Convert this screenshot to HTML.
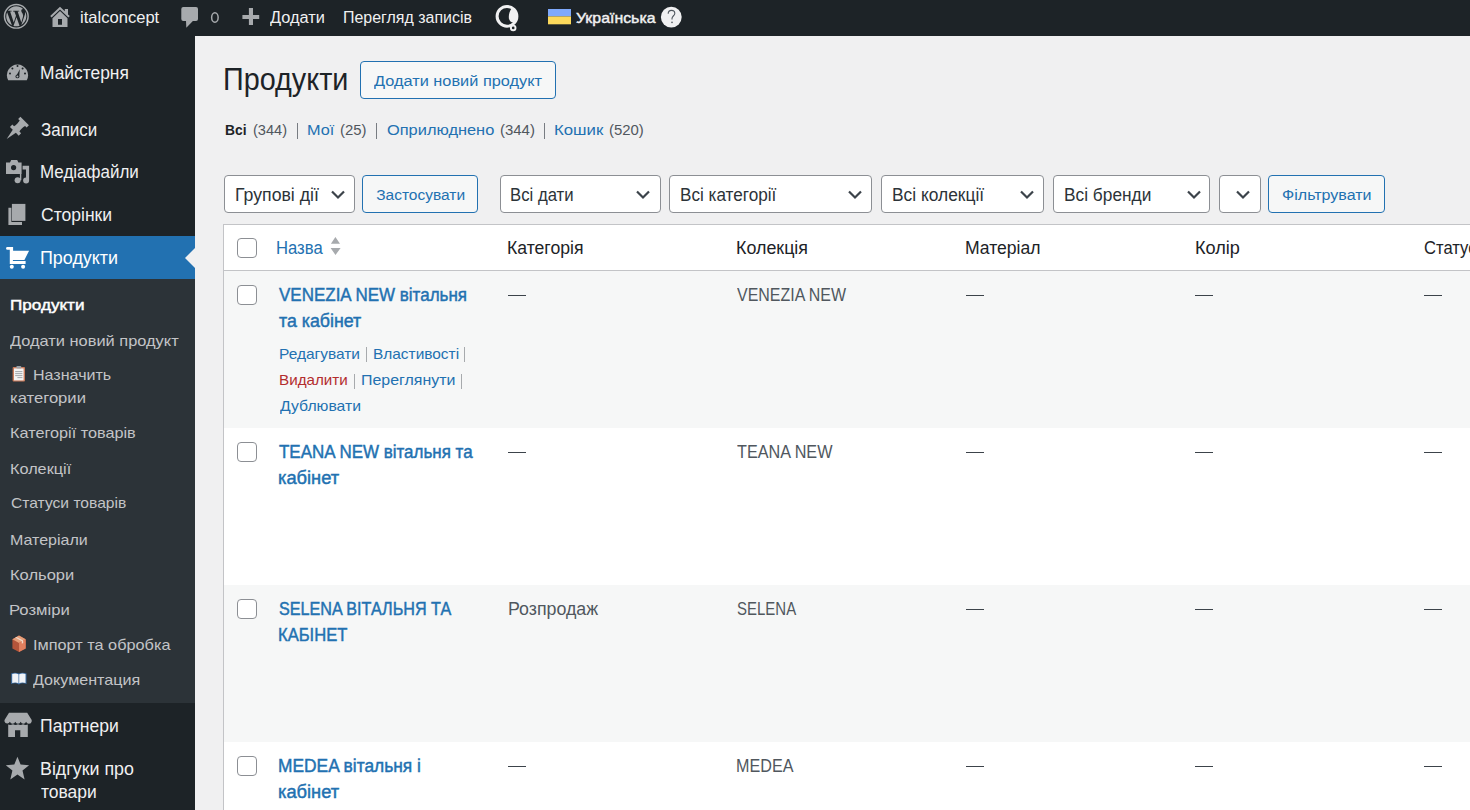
<!DOCTYPE html>
<html lang="uk"><head><meta charset="utf-8"><title>Продукти</title>
<style>
html,body{margin:0;padding:0;width:1470px;height:810px;overflow:hidden;background:#f0f0f1;font-family:"Liberation Sans",sans-serif}
.t{position:absolute;white-space:nowrap;line-height:1;transform-origin:0 0}
.b{position:absolute;box-sizing:border-box}
#bar{left:0;top:0;width:1470px;height:36px;background:#1d2327}
#side{left:0;top:36px;width:195px;height:774px;background:#1d2327}
#act{left:0;top:236px;width:195px;height:43px;background:#2271b1}
#sub{left:0;top:279px;width:195px;height:424px;background:#2c3338}
.sel{background:#fff;border:1px solid #8c8f94;border-radius:4px;top:175px;height:38px}
.btn{background:#f6f7f7;border:1px solid #2271b1;border-radius:4px}
.cb{background:#fff;border:1px solid #8c8f94;border-radius:4px;width:20px;height:20px;left:237px}
svg{position:absolute;overflow:visible}
</style></head><body>
<div class="b" id="bar"></div>
<div class="b" id="side"></div>
<div class="b" id="act"></div>
<div class="b" id="sub"></div>
<!-- active arrow -->
<svg style="left:185px;top:248px" width="10" height="20" viewBox="0 0 10 20"><path d="M10 0 L0 10 L10 20 Z" fill="#f0f0f1"/></svg>

<!-- page title button -->
<div class="b btn" style="left:360px;top:61px;width:196px;height:38px"></div>
<!-- filter bar -->
<div class="b sel" style="left:224px;width:131px"></div>
<div class="b btn" style="left:362px;top:175px;width:116px;height:38px"></div>
<div class="b sel" style="left:500px;width:161px"></div>
<div class="b sel" style="left:669px;width:203px"></div>
<div class="b sel" style="left:881px;width:163px"></div>
<div class="b sel" style="left:1053px;width:157px"></div>
<div class="b sel" style="left:1219px;width:42px"></div>
<div class="b btn" style="left:1268px;top:175px;width:117px;height:38px"></div>
<!-- chevrons -->
<svg style="left:331px;top:190px" width="14" height="9" viewBox="0 0 14 9"><path d="M1 1.5 L7 7.5 L13 1.5" fill="none" stroke="#3c434a" stroke-width="2.2"/></svg>
<svg style="left:636px;top:190px" width="14" height="9" viewBox="0 0 14 9"><path d="M1 1.5 L7 7.5 L13 1.5" fill="none" stroke="#3c434a" stroke-width="2.2"/></svg>
<svg style="left:848px;top:190px" width="14" height="9" viewBox="0 0 14 9"><path d="M1 1.5 L7 7.5 L13 1.5" fill="none" stroke="#3c434a" stroke-width="2.2"/></svg>
<svg style="left:1020px;top:190px" width="14" height="9" viewBox="0 0 14 9"><path d="M1 1.5 L7 7.5 L13 1.5" fill="none" stroke="#3c434a" stroke-width="2.2"/></svg>
<svg style="left:1187px;top:190px" width="14" height="9" viewBox="0 0 14 9"><path d="M1 1.5 L7 7.5 L13 1.5" fill="none" stroke="#3c434a" stroke-width="2.2"/></svg>
<svg style="left:1236px;top:190px" width="14" height="9" viewBox="0 0 14 9"><path d="M1 1.5 L7 7.5 L13 1.5" fill="none" stroke="#3c434a" stroke-width="2.2"/></svg>

<!-- table -->
<div class="b" style="left:223px;top:224px;width:1300px;height:600px;background:#fff;border-left:1px solid #c3c4c7;border-top:1px solid #c3c4c7"></div>
<div class="b" style="left:224px;top:270px;width:1300px;height:1px;background:#c3c4c7"></div>
<div class="b" style="left:224px;top:271px;width:1300px;height:157px;background:#f6f7f7"></div>
<div class="b" style="left:224px;top:585px;width:1300px;height:157px;background:#f6f7f7"></div>
<div class="b cb" style="top:238px"></div>
<div class="b cb" style="top:285px"></div>
<div class="b cb" style="top:442px"></div>
<div class="b cb" style="top:599px"></div>
<div class="b cb" style="top:756px"></div>
<!-- sort arrows -->
<svg style="left:330px;top:237px" width="11" height="18" viewBox="0 0 11 18"><path d="M0.9 6.8 L5.4 -0.1 L10 6.8 Z M0.6 11 L5.5 18.1 L10.6 11 Z" fill="#a7aaad"/></svg>

<svg style="left:0;top:0" width="1470" height="810" viewBox="0 0 1470 810">
<!-- WP logo -->
<g transform="translate(3.75 3.75) scale(1.046)"><circle cx="12" cy="12" r="11.3" fill="none" stroke="#a7aaad" stroke-width="1.4"/><path transform="translate(12 12) scale(0.89) translate(-12 -12)" fill="#a7aaad" d="M21.469 6.825c.84 1.537 1.318 3.3 1.318 5.175 0 3.979-2.156 7.456-5.363 9.325l3.295-9.527c.615-1.54.82-2.771.82-3.864 0-.405-.026-.78-.07-1.11M13.488 6.93c.647-.03 1.232-.105 1.232-.105.582-.075.514-.93-.067-.899 0 0-1.755.135-2.88.135-1.064 0-2.850-.15-2.850-.15-.585-.03-.661.855-.075.885 0 0 .54.061 1.125.09l1.68 4.605-2.37 7.08L5.354 6.9c.649-.03 1.234-.1 1.234-.1.585-.075.516-.93-.065-.896 0 0-1.746.138-2.874.138-.2 0-.438-.008-.69-.015C4.911 3.15 8.235 1.215 12 1.215c2.809 0 5.365 1.072 7.286 2.833-.046-.003-.091-.009-.141-.009-1.06 0-1.812.923-1.812 1.914 0 .89.513 1.643 1.06 2.531.411.72.89 1.643.89 2.977 0 .915-.354 1.994-.821 3.479l-1.075 3.585-3.9-11.61.001.014zM12 22.784c-1.059 0-2.081-.153-3.048-.437l3.237-9.406 3.315 9.087c.024.053.05.101.078.149-1.12.393-2.325.609-3.582.609M1.211 12c0-1.564.336-3.050.935-4.390L7.290 21.709C3.694 19.960 1.212 16.271 1.211 12"/></g>
<!-- home -->
<path d="M50.2 16.1 L60 6.8 L64.8 11.3 V9.1 H68 V14.4 L69.8 16.1 L68.4 17.5 L60 9.6 L51.6 17.5 Z" fill="#a7aaad"/>
<path d="M52.5 18.2 L60 10.9 L67.5 18.2 V27.1 H52.5 Z M58 19.1 V24.8 H62 V19.1 Z" fill="#a7aaad" fill-rule="evenodd"/>
<!-- comment -->
<path d="M183.3 6.9 H196 Q198 6.9 198 8.9 V19 Q198 21 196 21 H192.9 L186.3 27.8 L186 21 H183.3 Q181.3 21 181.3 19 V8.9 Q181.3 6.9 183.3 6.9 Z" fill="#a7aaad"/>
<ellipse cx="214.9" cy="17.45" rx="3.25" ry="4.75" fill="none" stroke="#a7aaad" stroke-width="1.5"/>
<!-- plus -->
<path d="M248.9 7.9 H253 V14.9 H259.2 V18.9 H253 V25 H248.9 V18.9 H242.4 V14.9 H248.9 Z" fill="#a7aaad"/>
<!-- Q logo -->
<circle cx="507" cy="16.3" r="9.9" fill="none" stroke="#f0f0f1" stroke-width="3.0"/>
<path d="M512.4 7.2 C509.8 10.2 508.4 14.2 508.9 18.2 C509.4 22 513.2 23.6 516 21.6 C518.6 19.4 518.4 12.6 512.4 7.2 Z" fill="#f0f0f1"/>
<circle cx="513.2" cy="27.9" r="2.3" fill="none" stroke="#f0f0f1" stroke-width="1.9"/>
<!-- flag -->
<rect x="548" y="9" width="23" height="7.4" fill="#7fa9fb"/>
<rect x="548" y="16.4" width="23" height="7.9" fill="#fcd95b"/>
<!-- help -->
<circle cx="671.3" cy="17.1" r="10.4" fill="#f0f0f1"/>
<path d="M668.2 13.8 C668.2 11.6 669.7 10.4 671.5 10.4 C673.4 10.4 674.8 11.7 674.8 13.4 C674.8 15.6 672 16 672 18.6 V19.4" fill="none" stroke="#50575e" stroke-width="1.1"/>
<circle cx="672" cy="22.4" r="0.8" fill="#50575e"/>

<!-- dashboard gauge -->
<path d="M8.2 80.2 A10.6 10.6 0 1 1 26.8 80.2 Z" fill="#a7aaad"/>
<circle cx="17.5" cy="66" r="1" fill="#1d2327"/>
<circle cx="12.4" cy="68.6" r="1" fill="#1d2327"/>
<circle cx="22.6" cy="68.6" r="1" fill="#1d2327"/>
<circle cx="10" cy="73.5" r="1" fill="#1d2327"/>
<circle cx="25" cy="73.5" r="1" fill="#1d2327"/>
<path d="M16 76.5 L19.8 69.2 L19.2 77.4 Z" fill="#1d2327"/>
<circle cx="17.4" cy="76.4" r="1.9" fill="#1d2327"/>
<circle cx="17.4" cy="76.4" r="1.0" fill="#a7aaad"/>
<!-- pin -->
<g transform="translate(15.6 130) rotate(45)">
<path d="M-6 -12.8 H6 V-9.6 H3.8 C3.1 -7.4 3.1 -3.6 3.8 -1.6 H6.2 V1.8 H2.2 L0 12.6 L-2.2 1.8 H-6.2 V-1.6 H-3.8 C-3.1 -3.6 -3.1 -7.4 -3.8 -9.6 H-6 Z" fill="#a7aaad"/>
</g>
<!-- media -->
<path d="M6 162.5 H10 L11.2 160 H17.2 L18.4 162.5 H21.6 V174 H6 Z" fill="#a7aaad"/>
<circle cx="13.6" cy="167.6" r="2.6" fill="#1d2327"/>
<path d="M22.6 165.8 H29.1 V180.5 A3 3 0 1 1 26 177.5 V169.4 H22.6 Z" fill="#a7aaad"/>
<circle cx="17.6" cy="180.2" r="3" fill="#a7aaad"/>
<path d="M20.6 174 V180.2" stroke="#a7aaad" stroke-width="1.4"/>
<!-- pages -->
<path d="M11.9 203.9 H25.4 V220.9 H11.9 Z" fill="#a7aaad"/>
<path d="M8.4 207.8 H11.4 V221.9 H22 V225.1 H8.4 Z" fill="#a7aaad"/>
<!-- cart -->
<path d="M7.4 247.1 H13.1 V250.7 H29.1 L24.4 260 H12.9 V260.9 H25.6 V264 H9.8 V249.8 H7.4 A1.35 1.35 0 0 1 7.4 247.1 Z" fill="#ffffff"/>
<circle cx="11.8" cy="266.8" r="2" fill="#ffffff"/>
<circle cx="23.1" cy="266.8" r="2" fill="#ffffff"/>
<!-- store -->
<path d="M9 712.8 H27.2 L31.7 720 V721.5 A2.9 2.9 0 0 1 26.1 721.8 A2.9 2.9 0 0 1 20.7 721.8 A2.9 2.9 0 0 1 15.3 721.8 A2.9 2.9 0 0 1 9.9 721.8 A2.9 2.9 0 0 1 4.5 721.5 V720 Z" fill="#a7aaad"/>
<path d="M8.2 724.6 C9.6 725.2 11.6 725 13 724.2 C14.6 725.2 16.6 725.2 18 724.2 C19.6 725.2 21.6 725.2 23 724.2 C24.6 725.2 26.4 725.2 27.8 724.6 V737.1 H20.3 V730.2 H15 V737.1 H8.2 Z" fill="#a7aaad"/>
<!-- star -->
<path d="M17.45 756.8 L20.6 764.6 L29.1 765.2 L22.5 770.6 L24.6 779.6 L17.45 774.6 L10.3 779.6 L12.4 770.6 L5.8 765.2 L14.3 764.6 Z" fill="#a7aaad"/>

<!-- clipboard emoji -->
<rect x="12.6" y="367" width="12.4" height="14.6" rx="1" fill="#c97b5a"/>
<rect x="14" y="368.4" width="9.6" height="12" fill="#f4f4f4"/>
<rect x="16.3" y="365.9" width="5" height="2.6" rx="1" fill="#9aa0a6"/>
<path d="M15.2 371.6 H22.4 M15.2 373.6 H22.4 M15.2 375.6 H22.4 M17.4 377.6 H22.4" stroke="#8d9399" stroke-width="0.8"/>
<!-- box emoji -->
<path d="M19 635.6 L25.7 639.2 L25.7 648.4 L19 652 L12.4 648.4 L12.4 639.2 Z" fill="#b5553a"/>
<path d="M12.4 639.2 L19 635.6 L25.7 639.2 L19 642.9 Z" fill="#e7a07a"/>
<path d="M19 642.9 L25.7 639.2 L25.7 648.4 L19 652 Z" fill="#e07f5f"/>
<path d="M15.2 637.6 L21.8 641.3 L21.8 643.8 L23.2 643 L23.2 640.5 L16.6 636.9 Z" fill="#f1d7c6"/>
<!-- book emoji -->
<path d="M11.2 673.5 C13.5 672.4 16.6 672.4 18.85 673.6 C21.1 672.4 24.2 672.4 26.5 673.5 V684 C24.2 683 21.1 683 18.85 684.5 C16.6 683 13.5 683 11.2 684 Z" fill="#3b6ea5"/>
<path d="M12.2 673.9 C14.2 673.2 16.6 673.2 18.5 674.2 V683.2 C16.6 682.3 14.2 682.3 12.2 683 Z M19.2 674.2 C21.1 673.2 23.5 673.2 25.5 673.9 V683 C23.5 682.3 21.1 682.3 19.2 683.2 Z" fill="#f2f4f7"/>
</svg>

<div class="t" style="left:79.60px;top:9.00px;font-size:16.5px;color:#f0f0f1;transform:scaleX(1.0039)">italconcept</div>
<div class="t" style="left:270.00px;top:10.00px;font-size:16px;color:#f0f0f1;transform:scaleX(1.0213)">Додати</div>
<div class="t" style="left:342.70px;top:10.00px;font-size:16px;color:#f0f0f1;transform:scaleX(0.9973)">Перегляд записів</div>
<div class="t" style="left:576.20px;top:10.00px;font-size:15.5px;color:#f0f0f1;-webkit-text-stroke:0.45px #f0f0f1;transform:scaleX(1.0245)">Українська</div>
<div class="t" style="left:39.81px;top:65.00px;font-size:17.5px;color:#f0f0f1;transform:scaleX(0.9934)">Майстерня</div>
<div class="t" style="left:40.70px;top:122.00px;font-size:17.5px;color:#f0f0f1;transform:scaleX(0.9685)">Записи</div>
<div class="t" style="left:39.73px;top:164.00px;font-size:17.5px;color:#f0f0f1;transform:scaleX(0.9703)">Медіафайли</div>
<div class="t" style="left:40.70px;top:207.00px;font-size:17.5px;color:#f0f0f1;transform:scaleX(1.0024)">Сторінки</div>
<div class="t" style="left:39.68px;top:250.00px;font-size:17.5px;color:#ffffff;transform:scaleX(1.0230)">Продукти</div>
<div class="t" style="left:39.90px;top:718.00px;font-size:17.5px;color:#f0f0f1;transform:scaleX(1.0039)">Партнери</div>
<div class="t" style="left:39.88px;top:761.00px;font-size:17.5px;color:#f0f0f1;transform:scaleX(1.0187)">Відгуки про</div>
<div class="t" style="left:40.90px;top:784.00px;font-size:17.5px;color:#f0f0f1;transform:scaleX(0.9979)">товари</div>
<div class="t" style="left:9.56px;top:297.00px;font-size:15px;color:#ffffff;-webkit-text-stroke:0.45px #ffffff;transform:scaleX(1.1392)">Продукти</div>
<div class="t" style="left:10.40px;top:333.00px;font-size:15px;color:#c3c4c7;transform:scaleX(1.0925)">Додати новий продукт</div>
<div class="t" style="left:33.13px;top:367.00px;font-size:15px;color:#c3c4c7;transform:scaleX(1.0700)">Назначить</div>
<div class="t" style="left:9.69px;top:390.00px;font-size:15px;color:#c3c4c7;transform:scaleX(1.1079)">категории</div>
<div class="t" style="left:9.52px;top:425.00px;font-size:15px;color:#c3c4c7;transform:scaleX(1.0829)">Категорії товарів</div>
<div class="t" style="left:9.52px;top:461.00px;font-size:15px;color:#c3c4c7;transform:scaleX(1.0829)">Колекції</div>
<div class="t" style="left:10.60px;top:495.00px;font-size:15px;color:#c3c4c7;transform:scaleX(1.0404)">Статуси товарів</div>
<div class="t" style="left:9.53px;top:532.00px;font-size:15px;color:#c3c4c7;transform:scaleX(1.0673)">Матеріали</div>
<div class="t" style="left:9.50px;top:567.00px;font-size:15px;color:#c3c4c7;transform:scaleX(1.1000)">Кольори</div>
<div class="t" style="left:9.49px;top:602.00px;font-size:15px;color:#c3c4c7;transform:scaleX(1.1089)">Розміри</div>
<div class="t" style="left:32.81px;top:637.00px;font-size:15px;color:#c3c4c7;transform:scaleX(1.0854)">Імпорт та обробка</div>
<div class="t" style="left:33.00px;top:672.00px;font-size:15px;color:#c3c4c7;transform:scaleX(1.0734)">Документация</div>
<div class="t" style="left:222.84px;top:64.00px;font-size:31px;color:#1d2327;transform:scaleX(0.9281)">Продукти</div>
<div class="t" style="left:374.00px;top:73.00px;font-size:15.5px;color:#2271b1;transform:scaleX(1.0532)">Додати новий продукт</div>
<div class="t" style="left:225.28px;top:122.00px;font-size:15px;color:#1d2327;font-weight:700;transform:scaleX(0.9200)">Всі</div>
<div class="t" style="left:252.80px;top:122.00px;font-size:15px;color:#50575e;transform:scaleX(0.9737)">(344)</div>
<div class="t" style="left:307.32px;top:122.00px;font-size:15px;color:#2271b1;transform:scaleX(1.0837)">Мої</div>
<div class="t" style="left:340.00px;top:122.00px;font-size:15px;color:#50575e;transform:scaleX(0.9933)">(25)</div>
<div class="t" style="left:386.80px;top:122.00px;font-size:15px;color:#2271b1;transform:scaleX(1.0925)">Оприлюднено</div>
<div class="t" style="left:499.70px;top:122.00px;font-size:15px;color:#50575e;transform:scaleX(0.9965)">(344)</div>
<div class="t" style="left:553.88px;top:122.00px;font-size:15px;color:#2271b1;transform:scaleX(1.1197)">Кошик</div>
<div class="t" style="left:608.60px;top:122.00px;font-size:15px;color:#50575e;transform:scaleX(0.9937)">(520)</div>
<div class="t" style="left:234.69px;top:187.00px;font-size:17.5px;color:#2c3338;transform:scaleX(1.0105)">Групові дії</div>
<div class="t" style="left:376.20px;top:187.00px;font-size:15.5px;color:#2271b1">Застосувати</div>
<div class="t" style="left:510.44px;top:187.00px;font-size:17.5px;color:#2c3338;transform:scaleX(0.9560)">Всі дати</div>
<div class="t" style="left:680.12px;top:187.00px;font-size:17.5px;color:#2c3338;transform:scaleX(0.9798)">Всі категорії</div>
<div class="t" style="left:892.01px;top:187.00px;font-size:17.5px;color:#2c3338;transform:scaleX(0.9926)">Всі колекції</div>
<div class="t" style="left:1063.61px;top:187.00px;font-size:17.5px;color:#2c3338;transform:scaleX(0.9892)">Всі бренди</div>
<div class="t" style="left:1281.70px;top:187.00px;font-size:15.5px;color:#2271b1;transform:scaleX(1.0353)">Фільтрувати</div>
<div class="t" style="left:276.05px;top:240.00px;font-size:17.5px;color:#2271b1;transform:scaleX(0.9524)">Назва</div>
<div class="t" style="left:506.99px;top:240.00px;font-size:17.5px;color:#1d2327;transform:scaleX(1.0075)">Категорія</div>
<div class="t" style="left:735.98px;top:240.00px;font-size:17.5px;color:#1d2327;transform:scaleX(1.0209)">Колекція</div>
<div class="t" style="left:965.00px;top:240.00px;font-size:17.5px;color:#1d2327;transform:scaleX(1.0037)">Матеріал</div>
<div class="t" style="left:1194.66px;top:240.00px;font-size:17.5px;color:#1d2327;transform:scaleX(1.0350)">Колір</div>
<div class="t" style="left:1424.30px;top:240.00px;font-size:17.5px;color:#1d2327;transform:scaleX(0.9484)">Статус</div>
<div class="t" style="left:278.80px;top:286.00px;font-size:18px;color:#2271b1;-webkit-text-stroke:0.45px #2271b1;transform:scaleX(0.9436)">VENEZIA NEW вітальня</div>
<div class="t" style="left:278.80px;top:312.00px;font-size:18px;color:#2271b1;-webkit-text-stroke:0.45px #2271b1;transform:scaleX(0.9880)">та кабінет</div>
<div class="t" style="left:737.00px;top:287.00px;font-size:17.5px;color:#50575e;transform:scaleX(0.9120)">VENEZIA NEW</div>
<div class="t" style="left:278.80px;top:443.00px;font-size:18px;color:#2271b1;-webkit-text-stroke:0.45px #2271b1;transform:scaleX(0.9434)">TEANA NEW вітальня та</div>
<div class="t" style="left:277.78px;top:469.00px;font-size:18px;color:#2271b1;-webkit-text-stroke:0.45px #2271b1;transform:scaleX(1.0162)">кабінет</div>
<div class="t" style="left:737.00px;top:444.00px;font-size:17.5px;color:#50575e;transform:scaleX(0.9262)">TEANA NEW</div>
<div class="t" style="left:278.80px;top:600.00px;font-size:18px;color:#2271b1;-webkit-text-stroke:0.45px #2271b1;transform:scaleX(0.8975)">SELENA ВІТАЛЬНЯ ТА</div>
<div class="t" style="left:277.88px;top:626.00px;font-size:18px;color:#2271b1;-webkit-text-stroke:0.45px #2271b1;transform:scaleX(0.9218)">КАБІНЕТ</div>
<div class="t" style="left:507.58px;top:601.00px;font-size:17.5px;color:#50575e;transform:scaleX(1.0163)">Розпродаж</div>
<div class="t" style="left:737.00px;top:601.00px;font-size:17.5px;color:#50575e;transform:scaleX(0.8561)">SELENA</div>
<div class="t" style="left:277.84px;top:757.00px;font-size:18px;color:#2271b1;-webkit-text-stroke:0.45px #2271b1;transform:scaleX(0.9640)">MEDEA вітальня і</div>
<div class="t" style="left:277.78px;top:783.00px;font-size:18px;color:#2271b1;-webkit-text-stroke:0.45px #2271b1;transform:scaleX(1.0162)">кабінет</div>
<div class="t" style="left:736.08px;top:758.00px;font-size:17.5px;color:#50575e;transform:scaleX(0.9227)">MEDEA</div>
<div class="t" style="left:278.87px;top:346.00px;font-size:15px;color:#2271b1;transform:scaleX(1.0323)">Редагувати</div>
<div class="t" style="left:372.57px;top:346.00px;font-size:15px;color:#2271b1;transform:scaleX(1.0284)">Властивості</div>
<div class="t" style="left:278.89px;top:372.00px;font-size:15px;color:#b32d2e;transform:scaleX(1.0138)">Видалити</div>
<div class="t" style="left:360.64px;top:372.00px;font-size:15px;color:#2271b1;transform:scaleX(1.0620)">Переглянути</div>
<div class="t" style="left:279.90px;top:398.00px;font-size:15px;color:#2271b1;transform:scaleX(1.0500)">Дублювати</div>
<div class="b" style="left:297px;top:123px;width:1px;height:16px;background:#787c82"></div>
<div class="b" style="left:376px;top:123px;width:1px;height:16px;background:#787c82"></div>
<div class="b" style="left:544px;top:123px;width:1px;height:16px;background:#787c82"></div>
<div class="b" style="left:366px;top:347px;width:1px;height:15px;background:#a7aaad"></div>
<div class="b" style="left:464px;top:347px;width:1px;height:15px;background:#a7aaad"></div>
<div class="b" style="left:354px;top:374px;width:1px;height:15px;background:#a7aaad"></div>
<div class="b" style="left:461px;top:374px;width:1px;height:15px;background:#a7aaad"></div>
<div class="b" style="left:508px;top:295px;width:18px;height:1px;background:#3c434a"></div>
<div class="b" style="left:966px;top:295px;width:18px;height:1px;background:#3c434a"></div>
<div class="b" style="left:1195px;top:295px;width:18px;height:1px;background:#3c434a"></div>
<div class="b" style="left:1424px;top:295px;width:18px;height:1px;background:#3c434a"></div>
<div class="b" style="left:508px;top:452px;width:18px;height:1px;background:#3c434a"></div>
<div class="b" style="left:966px;top:452px;width:18px;height:1px;background:#3c434a"></div>
<div class="b" style="left:1195px;top:452px;width:18px;height:1px;background:#3c434a"></div>
<div class="b" style="left:1424px;top:452px;width:18px;height:1px;background:#3c434a"></div>
<div class="b" style="left:966px;top:609px;width:18px;height:1px;background:#3c434a"></div>
<div class="b" style="left:1195px;top:609px;width:18px;height:1px;background:#3c434a"></div>
<div class="b" style="left:1424px;top:609px;width:18px;height:1px;background:#3c434a"></div>
<div class="b" style="left:508px;top:766px;width:18px;height:1px;background:#3c434a"></div>
<div class="b" style="left:966px;top:766px;width:18px;height:1px;background:#3c434a"></div>
<div class="b" style="left:1195px;top:766px;width:18px;height:1px;background:#3c434a"></div>
<div class="b" style="left:1424px;top:766px;width:18px;height:1px;background:#3c434a"></div>
</body></html>
